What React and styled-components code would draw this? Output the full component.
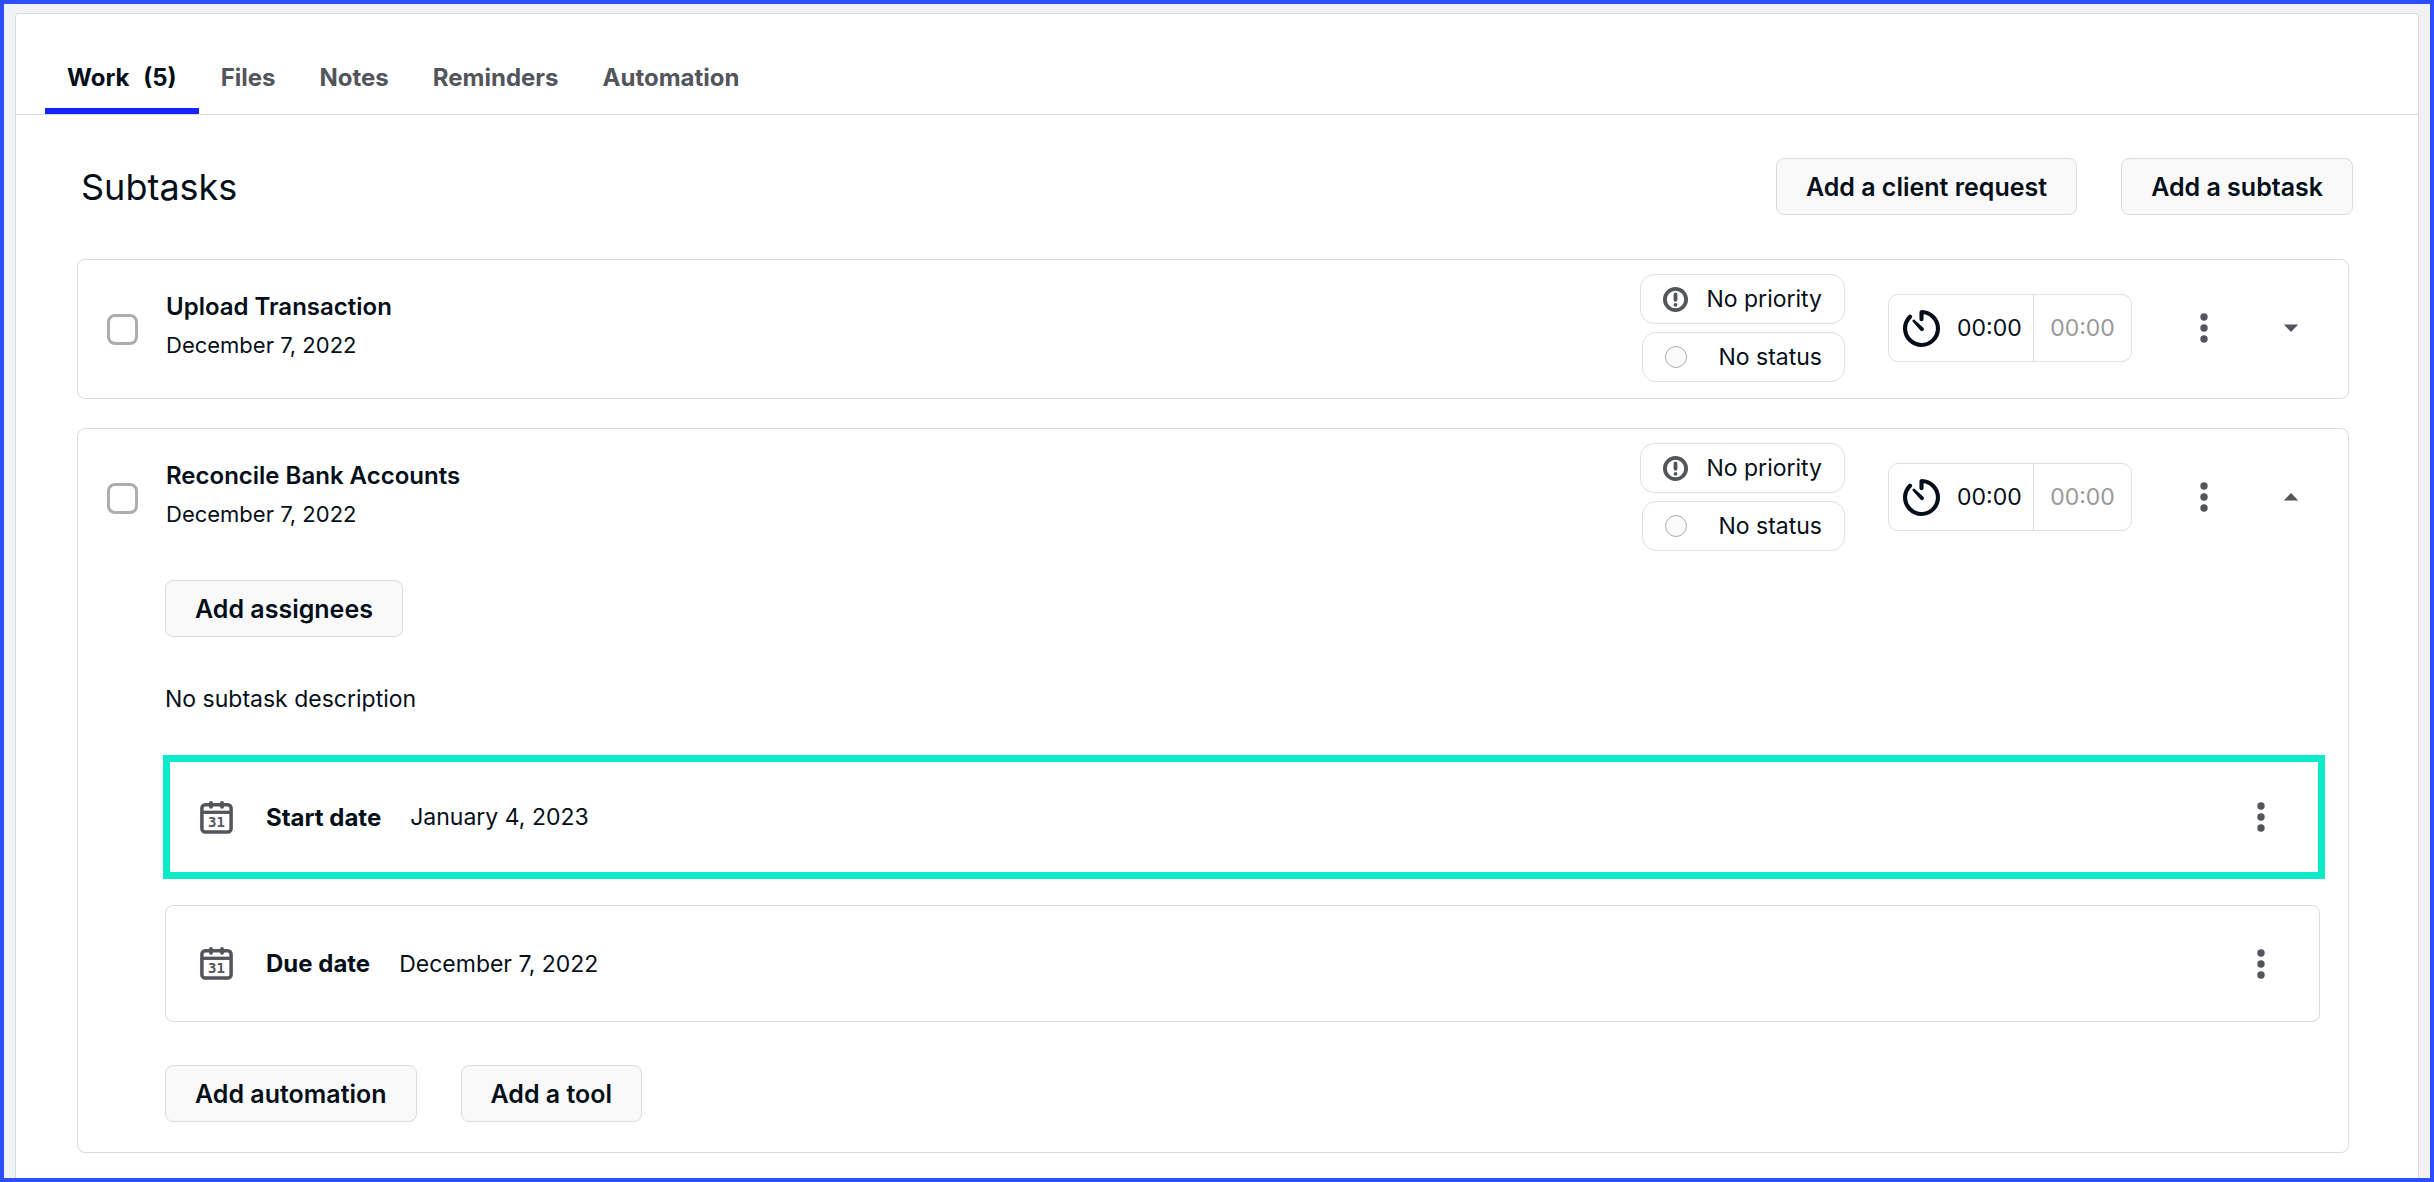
import { useState } from "react";
import styled, { createGlobalStyle } from "styled-components";

const tabs = ["Files", "Notes", "Reminders", "Automation"];

const KebabIcon = () => (
  <svg width="8" height="30" viewBox="0 0 8 30" fill="#53555d" aria-hidden="true">
    <circle cx="4" cy="4" r="3.7" />
    <circle cx="4" cy="15" r="3.7" />
    <circle cx="4" cy="26" r="3.7" />
  </svg>
);

const CaretIcon = ({ up }) => (
  <svg width="16" height="8" viewBox="0 0 16 8" fill="#53555d" aria-hidden="true">
    <path d={up ? "M8 0L15.2 7.6H.8z" : "M8 8L.8.4h14.4z"} />
  </svg>
);

const PriorityIcon = () => (
  <svg width="25" height="25" viewBox="0 0 25 25" aria-hidden="true">
    <circle cx="12.5" cy="12.5" r="10.6" fill="none" stroke="#53555d" strokeWidth="3.8" />
    <path d="M12.5 7.4v5.4" stroke="#53555d" strokeWidth="3.8" strokeLinecap="round" />
    <circle cx="12.5" cy="17.8" r="1.9" fill="#53555d" />
  </svg>
);

const TimerIcon = () => (
  <svg width="37" height="37" viewBox="40 40 432 432" aria-hidden="true">
    <path
      d="M122 119A191.85 191.85 0 0064 254c-1.18 106.35 85.65 193.8 192 194 106.2.2 192-85.83 192-192 0-104.54-83.55-189.61-187.5-192a4.36 4.36 0 00-4.5 4.37V148"
      fill="none"
      stroke="#050f19"
      strokeWidth="48"
      strokeLinecap="round"
      strokeLinejoin="round"
    />
    <path d="M154 176l90 104a24 24 0 0034-34L174 154a15 15 0 00-20 22z" fill="#050f19" />
  </svg>
);

const CalendarIcon = () => (
  <svg width="33" height="33" viewBox="0 0 33 33" aria-hidden="true">
    <rect x="1.9" y="3.7" width="29.2" height="27.4" rx="3.4" fill="none" stroke="#53555d" strokeWidth="3.5" />
    <path d="M1.9 11.3h29.2" stroke="#53555d" strokeWidth="3.3" />
    <path d="M11 2.1v3.6M22 2.1v3.6" stroke="#53555d" strokeWidth="4" strokeLinecap="round" />
    <text
      x="16.5"
      y="26"
      textAnchor="middle"
      fontFamily="'DejaVu Sans Mono', monospace"
      fontWeight="700"
      fontSize="14"
      fill="#53555d"
    >
      31
    </text>
  </svg>
);

function SubtaskHeader({ title, date, open, onToggle }) {
  return (
    <Header>
      <Check>
        <input type="checkbox" aria-label={`Complete ${title}`} />
      </Check>
      <Names>
        <h3>{title}</h3>
        <p>{date}</p>
      </Names>
      <Pills>
        <Pill type="button" $gap="18px">
          <PriorityIcon />
          No priority
        </Pill>
        <Pill type="button" $gap="31px">
          <StatusDot />
          No status
        </Pill>
      </Pills>
      <Timer>
        <TimerButton type="button">
          <TimerIcon />
          00:00
        </TimerButton>
        <TimerInput type="text" placeholder="00:00" aria-label={`Time budget for ${title}`} />
      </Timer>
      <Actions>
        <IconButton type="button" aria-label="More options">
          <KebabIcon />
        </IconButton>
        <IconButton type="button" aria-label="Toggle details" aria-expanded={open} onClick={onToggle}>
          <CaretIcon up={open} />
        </IconButton>
      </Actions>
    </Header>
  );
}

function DateRow({ label, value, highlighted }) {
  return (
    <Row $highlighted={highlighted}>
      <CalendarIcon />
      <strong>{label}</strong>
      <span>{value}</span>
      <IconButton type="button" aria-label={`${label} options`}>
        <KebabIcon />
      </IconButton>
    </Row>
  );
}

function Subtask({ title, date, startDate, defaultOpen = false }) {
  const [open, setOpen] = useState(defaultOpen);

  return (
    <Card>
      <SubtaskHeader title={title} date={date} open={open} onToggle={() => setOpen(!open)} />
      {open && (
        <Details>
          <Button type="button">Add assignees</Button>
          <Description>No subtask description</Description>
          {startDate && <DateRow label="Start date" value={startDate} highlighted />}
          <DateRow label="Due date" value={date} />
          <Footer>
            <Button type="button">Add automation</Button>
            <Button type="button">Add a tool</Button>
          </Footer>
        </Details>
      )}
    </Card>
  );
}

export default function App() {
  return (
    <Frame>
      <GlobalStyle />
      <Panel>
        <Tabs>
          <Tab href="#work" $active aria-current="page">
            Work <span>(5)</span>
          </Tab>
          {tabs.map((tab) => (
            <Tab key={tab} href={`#${tab.toLowerCase()}`}>
              {tab}
            </Tab>
          ))}
        </Tabs>
        <Heading>
          <h2>Subtasks</h2>
          <Button type="button">Add a client request</Button>
          <Button type="button">Add a subtask</Button>
        </Heading>
        <List>
          <Subtask title="Upload Transaction" date="December 7, 2022" />
          <Subtask
            title="Reconcile Bank Accounts"
            date="December 7, 2022"
            startDate="January 4, 2023"
            defaultOpen
          />
        </List>
      </Panel>
    </Frame>
  );
}

const GlobalStyle = createGlobalStyle`
  * {
    box-sizing: border-box;
  }
  body {
    margin: 0;
    font-family: Inter, sans-serif;
    font-size: 23px;
    color: #050f19;
  }
  h2, h3, p {
    margin: 0;
  }
  button, input {
    font-family: inherit;
    font-size: inherit;
    color: inherit;
    margin: 0;
  }
  button {
    cursor: pointer;
  }
  svg {
    display: block;
    flex-shrink: 0;
  }
`;

const Frame = styled.div`
  display: flex;
  min-height: 100vh;
  padding: 9px 11px 0;
  border: 4px solid #2b4eff;
  background-color: #f1f2f6;
`;

const Panel = styled.main`
  flex: 1;
  padding-bottom: 25px;
  background-color: #ffffff;
  border: 1px solid #d9dbdd;
  border-bottom: none;
  border-radius: 4px 4px 0 0;
`;

const Tabs = styled.nav`
  display: flex;
  padding-left: 29px;
  border-bottom: 1px solid #d9dbdd;
`;

const Tab = styled.a`
  padding: 49px 22px 15px;
  border-bottom: 6px solid ${({ $active }) => ($active ? "#1524ff" : "transparent")};
  color: ${({ $active }) => ($active ? "#050f19" : "#53555d")};
  font-size: 24px;
  font-weight: 700;
  line-height: 30px;
  text-decoration: none;
  span {
    margin-left: 8px;
  }
`;

const Heading = styled.div`
  display: flex;
  align-items: center;
  gap: 44px;
  padding: 43px 65px 44px;
  h2 {
    flex: 1;
    font-size: 36px;
    font-weight: 400;
    line-height: 44px;
  }
`;

const Button = styled.button`
  height: 57px;
  padding: 0 29px;
  border: 1px solid #d9dbdd;
  border-radius: 8px;
  background-color: #f9f9f9;
  font-size: 25px;
  font-weight: 600;
`;

const List = styled.div`
  display: flex;
  flex-direction: column;
  gap: 29px;
  padding: 0 69px 0 61px;
`;

const Card = styled.section`
  border: 1px solid #d9dbdd;
  border-radius: 8px;
`;

const Header = styled.header`
  display: flex;
  align-items: center;
  padding: 14px 37px 16px 29px;
`;

const Check = styled.label`
  padding-top: 3px;
  margin-right: 28px;
  input {
    display: block;
    appearance: none;
    width: 31px;
    height: 31px;
    border: 3px solid #adadad;
    border-radius: 8px;
    background-color: #ffffff;
    &:checked {
      background-color: #1524ff;
    }
  }
`;

const Names = styled.div`
  flex: 1;
  padding-bottom: 7px;
  h3 {
    font-size: 24px;
    font-weight: 600;
    line-height: 40px;
  }
  p {
    font-size: 22px;
    line-height: 36px;
  }
`;

const Pills = styled.div`
  display: flex;
  flex-direction: column;
  align-items: flex-end;
  gap: 8px;
`;

const Pill = styled.button`
  display: flex;
  align-items: center;
  gap: ${({ $gap }) => $gap};
  height: 50px;
  padding: 0 22px;
  border: 1px solid #dedfe1;
  border-radius: 14px;
  background-color: #ffffff;
`;

const StatusDot = styled.i`
  width: 22px;
  height: 22px;
  border: 1px solid #adadad;
  border-radius: 50%;
  background-color: #fbfbfb;
`;

const Timer = styled.div`
  display: flex;
  height: 68px;
  margin: 0 52px 0 43px;
  border: 1px solid #dedfe1;
  border-radius: 10px;
`;

const TimerButton = styled.button`
  display: flex;
  align-items: center;
  gap: 17px;
  width: 145px;
  padding: 0 0 0 14px;
  border: none;
  border-right: 1px solid #dedfe1;
  background: none;
`;

const TimerInput = styled.input`
  width: 97px;
  padding: 0;
  border: none;
  background: none;
  text-align: center;
  &::placeholder {
    color: #999999;
    opacity: 1;
  }
`;

const Actions = styled.div`
  display: flex;
  gap: 47px;
`;

const IconButton = styled.button`
  display: flex;
  align-items: center;
  justify-content: center;
  width: 40px;
  height: 40px;
  padding: 0;
  border: none;
  background: none;
`;

const Details = styled.div`
  padding: 13px 28px 30px 87px;
`;

const Description = styled.p`
  margin: 43px 0 37px;
  line-height: 38px;
`;

const Row = styled.div`
  display: flex;
  align-items: center;
  height: ${({ $highlighted }) => ($highlighted ? "124px" : "117px")};
  margin: ${({ $highlighted }) => ($highlighted ? "0 -5px 26px -2px" : "0")};
  padding: ${({ $highlighted }) => ($highlighted ? "0 37px 0 30px" : "0 38px 0 34px")};
  border: ${({ $highlighted }) => ($highlighted ? "7px solid #0ceac9" : "1px solid #d9dbdd")};
  border-radius: ${({ $highlighted }) => ($highlighted ? "0" : "8px")};
  strong {
    margin: 0 29px 0 33px;
    font-size: 24px;
    font-weight: 700;
  }
  span {
    flex: 1;
  }
`;

const Footer = styled.div`
  display: flex;
  gap: 44px;
  margin-top: 43px;
`;
